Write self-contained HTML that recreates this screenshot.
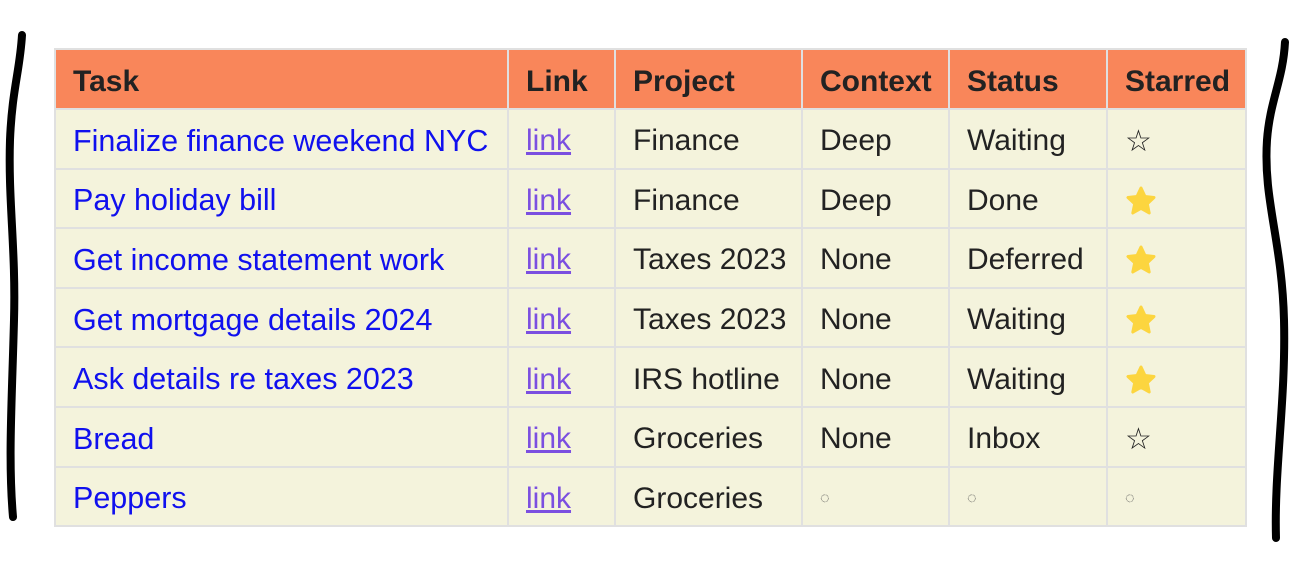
<!DOCTYPE html>
<html><head><style>
body{margin:0;width:1292px;height:564px;background:#fff;position:relative;overflow:hidden;font-family:"Liberation Sans",sans-serif}
table{position:absolute;left:54px;top:48px;border-collapse:collapse;font-size:30px;color:#222}
td,th{border:2px solid #e0e0e0;height:52.6px;padding:5px 0 0 17px;text-align:left;white-space:nowrap}
th{background:#f9865a;font-weight:bold;color:#222;height:53px}
td{background:#f4f3dc}
.t{color:#1010ee;font-size:30.5px}
.l{color:#7b4fe0;text-decoration:underline}
.o{font-size:16px;color:#555}
td svg{display:block}
</style></head><body>
<svg width="1292" height="564" style="position:absolute;left:0;top:0">
<path d="M22 35 C20 70 12 90 10 140 C8 200 16 250 14 320 C12 400 8 460 13 517" stroke="#000" stroke-width="8" fill="none" stroke-linecap="round"/>
<path d="M1285 42 C1283 80 1270 100 1267 140 C1263 200 1282 240 1284 320 C1286 400 1274 470 1276 538" stroke="#000" stroke-width="8" fill="none" stroke-linecap="round"/>
</svg>
<svg width="0" height="0" style="position:absolute"><defs><symbol id="s" viewBox="0 0 32 32"><path d="M16 3 L20 11.5 L29 12.5 L22.3 18.8 L24.2 28 L16 23.3 L7.8 28 L9.7 18.8 L3 12.5 L12 11.5 Z" fill="#fcd53f" stroke="#fcd53f" stroke-width="3" stroke-linejoin="round"/></symbol></defs></svg>
<table>
<tr><th style="width:434px">Task</th><th style="width:88px">Link</th><th style="width:168px">Project</th><th style="width:128px">Context</th><th style="width:139px">Status</th><th style="width:120px">Starred</th></tr>
<tr><td class="t">Finalize finance weekend NYC</td><td class="l">link</td><td>Finance</td><td>Deep</td><td>Waiting</td><td>☆</td></tr>
<tr><td class="t">Pay holiday bill</td><td class="l">link</td><td>Finance</td><td>Deep</td><td>Done</td><td><svg width="32" height="32"><use href="#s"/></svg></td></tr>
<tr><td class="t">Get income statement work</td><td class="l">link</td><td>Taxes 2023</td><td>None</td><td>Deferred</td><td><svg width="32" height="32"><use href="#s"/></svg></td></tr>
<tr><td class="t">Get mortgage details 2024</td><td class="l">link</td><td>Taxes 2023</td><td>None</td><td>Waiting</td><td><svg width="32" height="32"><use href="#s"/></svg></td></tr>
<tr><td class="t">Ask details re taxes 2023</td><td class="l">link</td><td>IRS hotline</td><td>None</td><td>Waiting</td><td><svg width="32" height="32"><use href="#s"/></svg></td></tr>
<tr><td class="t">Bread</td><td class="l">link</td><td>Groceries</td><td>None</td><td>Inbox</td><td>☆</td></tr>
<tr><td class="t">Peppers</td><td class="l">link</td><td>Groceries</td><td class="o">◌</td><td class="o">◌</td><td class="o">◌</td></tr>
</table>
</body></html>
